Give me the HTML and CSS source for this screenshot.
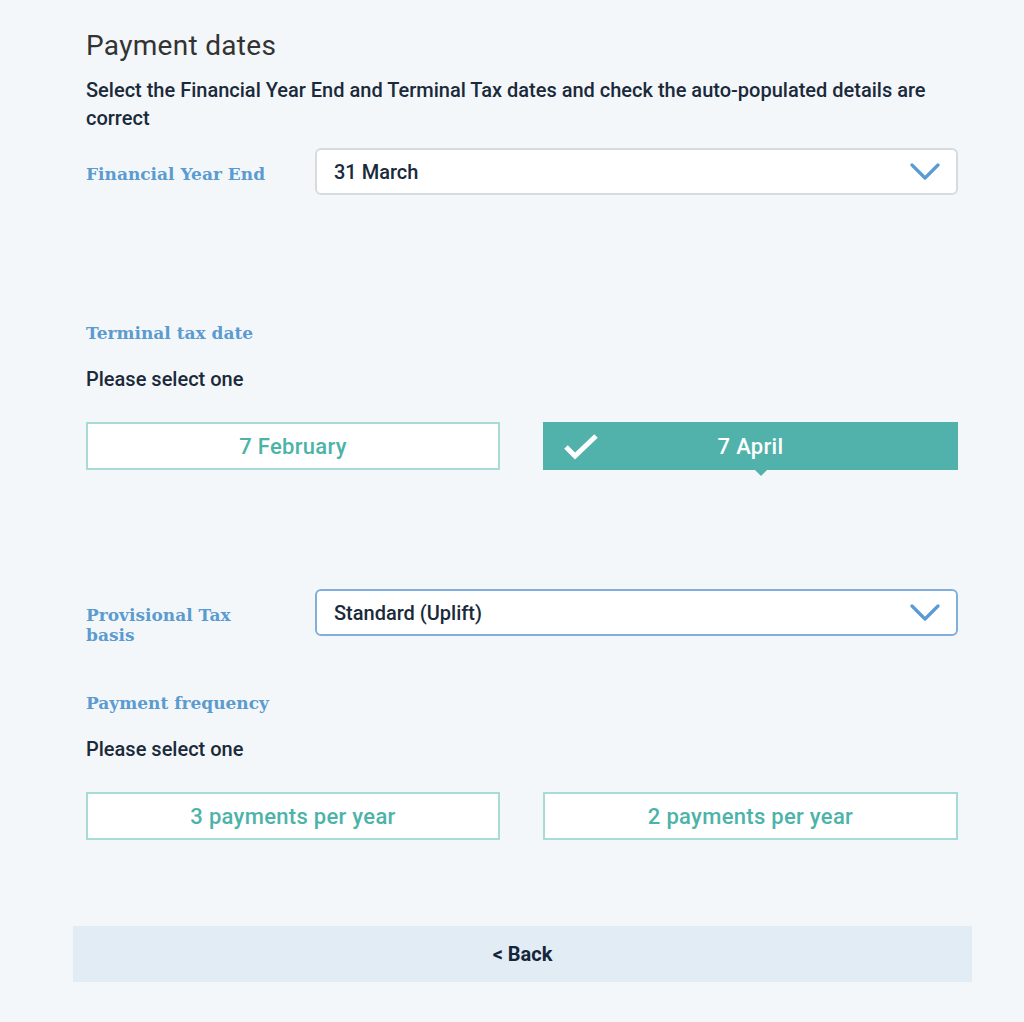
FILE: index.html
```html
<!DOCTYPE html>
<html lang="en">
<head>
<meta charset="utf-8">
<title>Payment dates</title>
<link rel="stylesheet" href="styles.css">
</head>
<body>
<main class="page">
  <h1 class="title">Payment dates</h1>
  <p class="intro">Select the Financial Year End and Terminal Tax dates and check the auto-populated details are correct</p>

  <div class="field-row row-fye">
    <label class="field-label">Financial Year End</label>
    <div class="select">
      <span class="select-value">31 March</span>
      <svg class="chevron" width="30" height="18" viewBox="0 0 30 18"><path d="M2 2 L15 15 L28 2" fill="none" stroke="#5b9bd4" stroke-width="3.2" stroke-linecap="round" stroke-linejoin="round"/></svg>
    </div>
  </div>

  <h2 class="section-label sec-terminal">Terminal tax date</h2>
  <p class="hint">Please select one</p>
  <div class="choices">
    <button class="choice">7 February</button>
    <button class="choice selected">
      <svg class="check" width="36" height="28" viewBox="0 0 36 28"><path d="M3 14 L12 23 L33 3" fill="none" stroke="#fff" stroke-width="5"/></svg>
      7 April
    </button>
  </div>

  <div class="field-row row-prov">
    <label class="field-label">Provisional Tax basis</label>
    <div class="select focused">
      <span class="select-value">Standard (Uplift)</span>
      <svg class="chevron" width="30" height="18" viewBox="0 0 30 18"><path d="M2 2 L15 15 L28 2" fill="none" stroke="#5b9bd4" stroke-width="3.2" stroke-linecap="round" stroke-linejoin="round"/></svg>
    </div>
  </div>

  <h2 class="section-label sec-freq">Payment frequency</h2>
  <p class="hint">Please select one</p>
  <div class="choices">
    <button class="choice">3 payments per year</button>
    <button class="choice">2 payments per year</button>
  </div>

  <button class="back">&lt; Back</button>
</main>
</body>
</html>
```

FILE: styles.css
```css
html, body {
  margin: 0;
  padding: 0;
  background: #f4f7fa;
}
body {
  font-family: Roboto, "Liberation Sans", sans-serif;
  color: #1a2a3a;
}
.page {
  padding: 30px 66px 40px 86px;
}
.title {
  margin: 0;
  font-size: 28px;
  line-height: 32px;
  font-weight: 400;
  letter-spacing: 0.3px;
  color: #333;
}
.intro {
  margin: 14px 0 0;
  font-size: 20px;
  line-height: 28px;
  font-weight: 500;
}
.field-row {
  display: flex;
  align-items: flex-start;
}
.row-fye { margin-top: 16px; }
.row-prov { margin-top: 119px; }
.field-label {
  flex: 0 0 229px;
  box-sizing: border-box;
  padding: 16px 44px 0 0;
  font-family: "DejaVu Serif", serif;
  font-weight: 700;
  font-size: 17px;
  line-height: 20px;
  color: #5b9bd0;
}
.select {
  flex: 1;
  height: 47px;
  box-sizing: border-box;
  border: 2px solid #d6dbdf;
  border-radius: 6px;
  background: #fff;
  display: flex;
  align-items: center;
  justify-content: space-between;
  padding: 0 16px 0 17px;
}
.select.focused {
  border-color: #80afdb;
}
.select-value {
  font-size: 20px;
  font-weight: 500;
}
.chevron { display: block; }
.section-label {
  margin: 0;
  font-family: "DejaVu Serif", serif;
  font-weight: 700;
  font-size: 17px;
  line-height: 24px;
  color: #5b9bd0;
}
.sec-terminal { margin-top: 126px; }
.sec-freq { margin-top: 46px; }
.hint {
  margin: 22px 0 0;
  font-size: 20px;
  line-height: 24px;
  font-weight: 500;
}
.choices {
  margin-top: 31px;
  display: grid;
  grid-template-columns: 414px 415px;
  column-gap: 43px;
}
.choice {
  position: relative;
  height: 48px;
  border: 2px solid #a6dcd5;
  background: #fff;
  color: #4db3a9;
  font-family: Roboto, "Liberation Sans", sans-serif;
  font-size: 22px;
  font-weight: 500;
  letter-spacing: 0.3px;
  cursor: pointer;
  padding: 0;
}
.choice.selected {
  background: #50b2aa;
  border-color: #50b2aa;
  color: #fff;
}
.choice.selected::after {
  content: "";
  position: absolute;
  left: calc(50% + 4px);
  bottom: -8px;
  border-left: 6px solid transparent;
  border-right: 6px solid transparent;
  border-top: 6px solid #50b2aa;
}
.check {
  position: absolute;
  left: 18px;
  top: 9px;
}
.back {
  display: block;
  width: calc(100% + 27px);
  margin: 86px -14px 0 -13px;
  height: 56px;
  border: none;
  background: #e2ecf5;
  color: #15263a;
  font-family: Roboto, "Liberation Sans", sans-serif;
  font-size: 20px;
  font-weight: 700;
  cursor: pointer;
}
```
